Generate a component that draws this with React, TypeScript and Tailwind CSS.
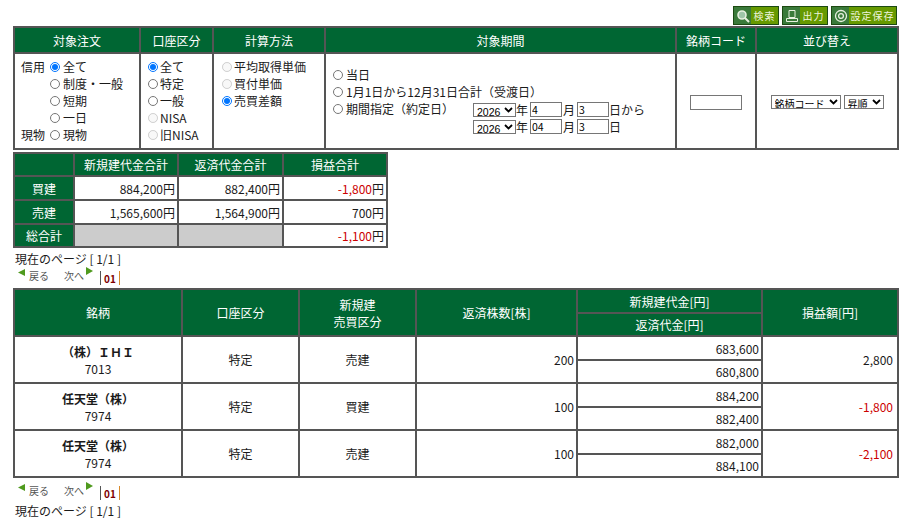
import React from "react";

const th = "bg-[#006633] text-white font-normal text-center border-2 border-[#555] p-0";
const td = "bg-white border-2 border-[#555] p-0";
const box = "ml-[2px] w-[32px] h-[15px] border border-[#767676] px-[1px] text-[10.5px] text-black";

const Sel = ({ label, width, size }: { label: string; width: string; size: string }) => (
  <span className={`relative block shrink-0 h-[14px] ${width}`}>
    <select className={`block w-full h-full appearance-none bg-white border border-[#767676] pl-[3px] pr-0 py-0 text-black font-['Liberation_Sans','Noto_Sans_CJK_JP',sans-serif] ${size}`}>
      <option>{label}</option>
    </select>
    <svg width="9" height="6" viewBox="0 0 9 6" fill="none" className="absolute right-[3px] top-[4px] pointer-events-none">
      <path d="M1 1l3.5 3.5L8 1" stroke="#000" strokeWidth="1.8" />
    </svg>
  </span>
);

const RadioRow = ({ name, label, checked, disabled, tight }: { name: string; label: string; checked?: boolean; disabled?: boolean; tight?: boolean }) => (
  <label className="flex items-center h-[17px] whitespace-nowrap">
    <input
      type="radio"
      name={name}
      defaultChecked={checked}
      disabled={disabled}
      className={`m-0 w-[10px] h-[10px] shrink-0 ${tight ? "mr-[2px]" : "mr-[3px]"}`}
    />
    <span>{label}</span>
  </label>
);

const ToolBtn = ({ label, width, icon }: { label: string; width: string; icon: React.ReactNode }) => (
  <div className={`flex h-[19px] bg-[#669900] border border-[#1c4a12] ${width}`}>
    <div className="w-[17px] h-full bg-[#3a7a3a] flex items-center justify-center shrink-0">{icon}</div>
    <span className="flex-1 text-center text-[#eef5dc] text-[10px] leading-[17px] tracking-[1px] whitespace-nowrap">{label}</span>
  </div>
);

const Pager = () => (
  <div className="flex items-start h-[17px] pl-[5px] pt-[1px]">
    <svg width="7" height="7" viewBox="0 0 7 7" className="mr-[4px]"><path d="M7 0v7L0 3.5z" fill="#4f9a1e" /></svg>
    <span className="text-[10px] leading-[14px] text-[#555]">戻る</span>
    <span className="text-[10px] leading-[14px] text-[#555] ml-[15px]">次へ</span>
    <svg width="7" height="8" viewBox="0 0 7 8" className="ml-[2px] -mt-[2px]"><path d="M0 0v8l7-4z" fill="#4f9a1e" /></svg>
    <span className="ml-[7px] mt-[2px] h-[14px] border-l border-r border-l-[#555] border-r-[#d98a2b] px-[3px] text-[10px] leading-[15px] font-bold text-[#800000]">01</span>
  </div>
);

const rows = [
  { name: "（株）ＩＨＩ", code: "7013", side: "売建", qty: "200", open: "683,600", close: "680,800", pl: "2,800", loss: false },
  { name: "任天堂（株）", code: "7974", side: "買建", qty: "100", open: "884,200", close: "882,400", pl: "-1,800", loss: true },
  { name: "任天堂（株）", code: "7974", side: "売建", qty: "100", open: "882,000", close: "884,100", pl: "-2,100", loss: true },
];

export default function App() {
  return (
    <div className="w-[909px] h-[524px] overflow-hidden bg-white pl-[13px] pr-[11px] text-[12px] leading-[17px] text-[#1a1a1a] font-['Noto_Sans_CJK_JP','Noto_Sans',sans-serif]">
      <div className="flex justify-end gap-[3px] pt-[6px] h-[26px] pr-[1px]">
        <ToolBtn
          label="検索"
          width="w-[46px]"
          icon={
            <svg width="14" height="14" viewBox="0 0 14 14" fill="none">
              <circle cx="6" cy="6" r="4" stroke="#e8f0e0" strokeWidth="1.6" fill="#9fc5a8" />
              <path d="M9 9l4 4" stroke="#e8f0e0" strokeWidth="2" />
            </svg>
          }
        />
        <ToolBtn
          label="出力"
          width="w-[46px]"
          icon={
            <svg width="14" height="14" viewBox="0 0 14 14" fill="none" stroke="#e8f0e0">
              <path d="M4 1.5h6v7H4zM1.5 9.5h11v3h-11z" />
            </svg>
          }
        />
        <ToolBtn
          label="設定保存"
          width="w-[66px]"
          icon={
            <svg width="14" height="14" viewBox="0 0 14 14" fill="none" stroke="#e8f0e0" strokeWidth="1.3">
              <circle cx="7" cy="7" r="5.5" />
              <circle cx="7" cy="7" r="2.4" />
            </svg>
          }
        />
      </div>

      <table className="w-[884px] table-fixed border-collapse">
        <colgroup>
          <col className="w-[126px]" />
          <col className="w-[73px]" />
          <col className="w-[112px]" />
          <col className="w-[351px]" />
          <col className="w-[80px]" />
          <col className="w-[142px]" />
        </colgroup>
        <thead>
          <tr className="h-[26px]">
            {["対象注文", "口座区分", "計算方法", "対象期間", "銘柄コード", "並び替え"].map((h) => (
              <th key={h} className={th}>{h}</th>
            ))}
          </tr>
        </thead>
        <tbody>
          <tr className="h-[96px]">
            <td className={`${td} align-top pt-[4px] pl-[6px]`}>
              <div className="grid grid-cols-[29px_1fr]">
                <span>信用</span>
                <div>
                  <RadioRow name="order" label="全て" checked />
                  <RadioRow name="order" label="制度・一般" />
                  <RadioRow name="order" label="短期" />
                  <RadioRow name="order" label="一日" />
                </div>
                <span>現物</span>
                <RadioRow name="order" label="現物" />
              </div>
            </td>
            <td className={`${td} align-top pt-[4px] pl-[7px]`}>
              <RadioRow tight name="account" label="全て" checked />
              <RadioRow tight name="account" label="特定" />
              <RadioRow tight name="account" label="一般" />
              <RadioRow tight name="account" label="NISA" disabled />
              <RadioRow tight name="account" label="旧NISA" disabled />
            </td>
            <td className={`${td} align-top pt-[4px] pl-[8px]`}>
              <RadioRow tight name="calc" label="平均取得単価" disabled />
              <RadioRow tight name="calc" label="買付単価" disabled />
              <RadioRow tight name="calc" label="売買差額" checked />
            </td>
            <td className={`${td} align-top pt-[12px] pl-[7px]`}>
              <RadioRow name="period" label="当日" />
              <RadioRow name="period" label="1月1日から12月31日合計（受渡日）" />
              <div className="flex">
                <div className="w-[140px]">
                  <RadioRow name="period" label="期間指定（約定日）" />
                </div>
                <div className="mt-[1px]">
                  <div className="flex items-center h-[17px]">
                    <Sel label="2026" width="w-[43px]" size="text-[10.5px]" />
                    <span>年</span>
                    <input readOnly defaultValue="4" className={box} />
                    <span className="ml-[1px]">月</span>
                    <input readOnly defaultValue="3" className={box} />
                    <span>日から</span>
                  </div>
                  <div className="flex items-center h-[17px]">
                    <Sel label="2026" width="w-[43px]" size="text-[10.5px]" />
                    <span>年</span>
                    <input readOnly defaultValue="04" className={box} />
                    <span className="ml-[1px]">月</span>
                    <input readOnly defaultValue="3" className={box} />
                    <span>日</span>
                  </div>
                </div>
              </div>
            </td>
            <td className={`${td} text-center`}>
              <input readOnly className="w-[52px] h-[15px] border border-[#767676] align-middle" />
            </td>
            <td className={`${td} text-center`}>
              <div className="flex justify-center gap-[3px] mt-[1px]">
                <Sel label="銘柄コード" width="w-[70px]" size="text-[10px]" />
                <Sel label="昇順" width="w-[40px]" size="text-[10px]" />
              </div>
            </td>
          </tr>
        </tbody>
      </table>

      <table className="w-[373px] table-fixed border-collapse mt-[2px]">
        <colgroup>
          <col className="w-[60px]" />
          <col className="w-[104px]" />
          <col className="w-[105px]" />
          <col className="w-[104px]" />
        </colgroup>
        <tbody>
          <tr className="h-[23px]">
            <th className={th}></th>
            <th className={th}>新規建代金合計</th>
            <th className={th}>返済代金合計</th>
            <th className={th}>損益合計</th>
          </tr>
          <tr className="h-[24px]">
            <th className={th}>買建</th>
            <td className={`${td} text-right pr-[2px]`}>884,200円</td>
            <td className={`${td} text-right pr-[2px]`}>882,400円</td>
            <td className={`${td} text-right pr-[2px]`}><span className="text-[#cc0000]">-1,800</span>円</td>
          </tr>
          <tr className="h-[24px]">
            <th className={th}>売建</th>
            <td className={`${td} text-right pr-[2px]`}>1,565,600円</td>
            <td className={`${td} text-right pr-[2px]`}>1,564,900円</td>
            <td className={`${td} text-right pr-[2px]`}>700円</td>
          </tr>
          <tr className="h-[23px]">
            <th className={th}>総合計</th>
            <td className="bg-[#cccccc] border-2 border-[#555]"></td>
            <td className="bg-[#cccccc] border-2 border-[#555]"></td>
            <td className={`${td} text-right pr-[2px]`}><span className="text-[#cc0000]">-1,100</span>円</td>
          </tr>
        </tbody>
      </table>

      <div className="pl-[2px] mt-[2px] h-[18px] leading-[18px]">現在のページ [ 1/1 ]</div>
      <Pager />

      <table className="w-[884px] table-fixed border-collapse mt-[3px]">
        <colgroup>
          <col className="w-[168px]" />
          <col className="w-[117px]" />
          <col className="w-[117px]" />
          <col className="w-[161px]" />
          <col className="w-[185px]" />
          <col className="w-[136px]" />
        </colgroup>
        <thead>
          <tr className="h-[24px]">
            <th rowSpan={2} className={th}>銘柄</th>
            <th rowSpan={2} className={th}>口座区分</th>
            <th rowSpan={2} className={th}>新規建<br />売買区分</th>
            <th rowSpan={2} className={th}>返済株数[株]</th>
            <th className={th}>新規建代金[円]</th>
            <th rowSpan={2} className={th}>損益額[円]</th>
          </tr>
          <tr className="h-[23px]">
            <th className={th}>返済代金[円]</th>
          </tr>
        </thead>
        <tbody>
          {rows.map((r, i) => (
            <React.Fragment key={i}>
              <tr className="h-[24px]">
                <td rowSpan={2} className={`${td} text-center`}>
                  <div className="font-bold">{r.name}</div>
                  <div>{r.code}</div>
                </td>
                <td rowSpan={2} className={`${td} text-center`}>特定</td>
                <td rowSpan={2} className={`${td} text-center`}>{r.side}</td>
                <td rowSpan={2} className={`${td} text-right pr-[2px]`}>{r.qty}</td>
                <td className={`${td} text-right pr-[2px]`}>{r.open}</td>
                <td rowSpan={2} className={`${td} text-right pr-[4px] ${r.loss ? "text-[#cc0000]" : ""}`}>{r.pl}</td>
              </tr>
              <tr className="h-[23px]">
                <td className={`${td} text-right pr-[2px]`}>{r.close}</td>
              </tr>
            </React.Fragment>
          ))}
        </tbody>
      </table>

      <div className="mt-[5px]"><Pager /></div>
      <div className="pl-[2px] mt-[2px] h-[18px] leading-[18px]">現在のページ [ 1/1 ]</div>
    </div>
  );
}
